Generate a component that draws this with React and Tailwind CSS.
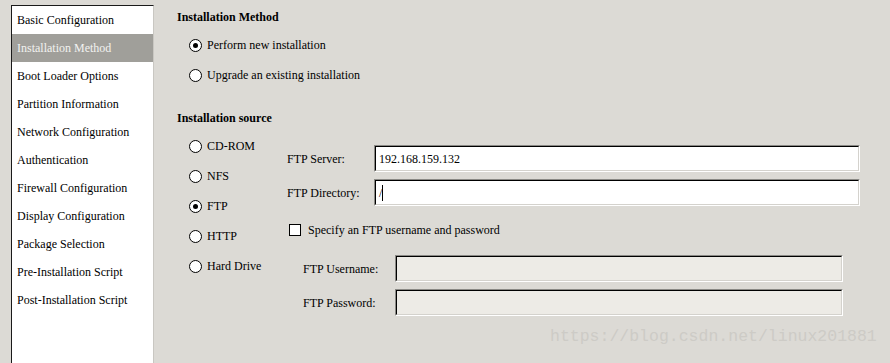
import React from "react";

const navItems = [
  "Basic Configuration",
  "Installation Method",
  "Boot Loader Options",
  "Partition Information",
  "Network Configuration",
  "Authentication",
  "Firewall Configuration",
  "Display Configuration",
  "Package Selection",
  "Pre-Installation Script",
  "Post-Installation Script",
];

const sources = ["CD-ROM", "NFS", "FTP", "HTTP", "Hard Drive"];

const Radio = ({ checked }) => (
  <span className="w-[13px] h-[13px] rounded-full border border-black bg-white flex items-center justify-center shrink-0">
    {checked && <span className="w-[5px] h-[5px] rounded-full bg-black" />}
  </span>
);

const Field = ({ value, disabled, caret, width }) => (
  <div className={`${width} h-[27px] border-t border-l border-[#8a8985] border-b border-r border-b-white border-r-white`}>
    <div
      className={`h-full border-t border-l border-black border-b border-r border-b-[#d4d2cd] border-r-[#d4d2cd] flex items-center pl-[3px] ${
        disabled ? "bg-[#edebe6]" : "bg-white"
      }`}
    >
      <span className="text-[12px] text-black leading-none">{value}</span>
      {caret && <span className="w-px h-[16px] bg-black" />}
    </div>
  </div>
);

export default function App() {
  return (
    <div className="w-[890px] h-[363px] bg-[#dcdad5] flex overflow-hidden relative text-black font-['Liberation_Serif','DejaVu_Serif',serif]">
      {/* left navigation */}
      <div className="ml-[11px] mt-[5px] w-[143px] bg-white border-t border-l border-[#1a1a1a] border-r border-r-[#c9c7c2]">
        {navItems.map((item, i) => (
          <div
            key={item}
            className={`h-[28px] flex items-center pl-[5px] text-[12px] ${
              i === 1 ? "bg-[#a09f9a] text-[#f2f2f0]" : ""
            }`}
          >
            {item}
          </div>
        ))}
      </div>

      {/* main panel */}
      <div className="flex-1 pl-[23px] pt-[10px] text-[12px]">
        <div className="h-[14px] flex items-center font-bold">Installation Method</div>
        <div className="mt-[6px] pl-[12px]">
          <div className="h-[30px] flex items-center gap-[5px]">
            <Radio checked />
            <span>Perform new installation</span>
          </div>
          <div className="h-[30px] flex items-center gap-[5px]">
            <Radio />
            <span>Upgrade an existing installation</span>
          </div>
        </div>

        <div className="mt-[21px] h-[14px] flex items-center font-bold">Installation source</div>

        <div className="mt-[6px] pl-[12px] flex">
          <div className="w-[98px]">
            {sources.map((s) => (
              <div key={s} className="h-[30px] flex items-center gap-[5px]">
                <Radio checked={s === "FTP"} />
                <span>{s}</span>
              </div>
            ))}
          </div>

          <div className="mt-[14px] flex flex-col">
            <div className="flex items-center">
              <span className="w-[87px]">FTP Server:</span>
              <Field value="192.168.159.132" width="w-[486px]" />
            </div>
            <div className="mt-[7px] flex items-center">
              <span className="w-[87px]">FTP Directory:</span>
              <Field value="/" caret width="w-[486px]" />
            </div>
            <div className="mt-[18px] h-[12px] flex items-center gap-[7px] pl-[2px]">
              <span className="w-[12px] h-[12px] border border-black bg-white shrink-0" />
              <span>Specify an FTP username and password</span>
            </div>
            <div className="mt-[19px] pl-[16px] flex items-center">
              <span className="w-[92px]">FTP Username:</span>
              <Field disabled width="w-[448px]" />
            </div>
            <div className="mt-[7px] pl-[16px] flex items-center">
              <span className="w-[92px]">FTP Password:</span>
              <Field disabled width="w-[448px]" />
            </div>
          </div>
        </div>
      </div>

      <div className="absolute left-[550px] top-[329px] text-[16.5px] text-[#cdcbc6] leading-none font-['Liberation_Mono',monospace]">
        https://blog.csdn.net/linux201881
      </div>
    </div>
  );
}
